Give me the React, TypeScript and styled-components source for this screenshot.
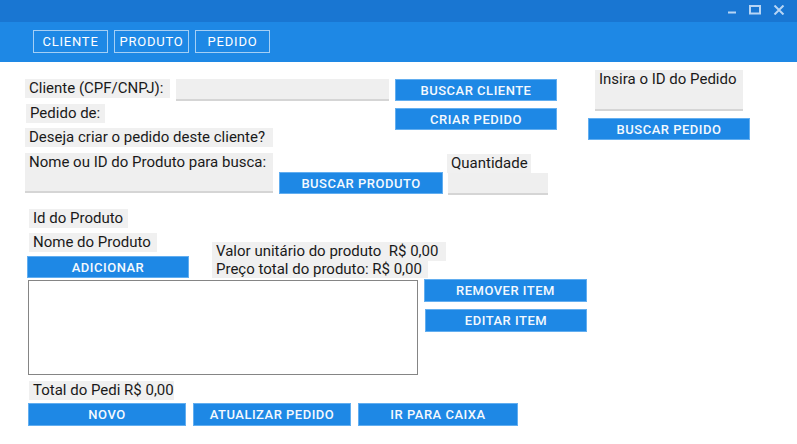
import React from "react";
import styled, { createGlobalStyle } from "styled-components";

const Global = createGlobalStyle`
  html, body { margin: 0; padding: 0; background: #ffffff; }
  body { font-family: Roboto, "Liberation Sans", Arial, sans-serif; }
  * { box-sizing: border-box; }
`;

const Window = styled.div`
  width: 797px;
  height: 444px;
  background: #ffffff;
  display: flex;
  flex-direction: column;
  overflow: hidden;
`;

const TitleBar = styled.div`
  height: 22px;
  background: #1976d2;
  display: flex;
  justify-content: flex-end;
  align-items: flex-start;
  padding-right: 12px;
`;

const WinControls = styled.div`
  display: flex;
  gap: 12px;
  padding-top: 5px;
`;

const NavBar = styled.div`
  height: 40px;
  background: #1e88e5;
  display: flex;
  align-items: flex-start;
  gap: 6px;
  padding: 8px 0 0 33px;
`;

const NavButton = styled.div`
  width: 75px;
  height: 23px;
  border: 1px solid rgba(255, 255, 255, 0.6);
  color: #ffffff;
  font-size: 13px;
  font-weight: 400;
  letter-spacing: 0.8px;
  display: flex;
  align-items: center;
  justify-content: center;
`;

const Content = styled.div`
  display: flex;
  flex-direction: column;
  padding-left: 25px;
`;

const TopSection = styled.div`
  display: flex;
  align-items: flex-start;
`;

const LeftStack = styled.div`
  display: flex;
  flex-direction: column;
  padding-top: 17px;
`;

const RightStack = styled.div`
  display: flex;
  flex-direction: column;
  align-items: flex-start;
  margin-left: 31px;
  padding-top: 8px;
  gap: 7px;
`;

const Row = styled.div<{ $gap?: number; $mt?: number; $ml?: number; $align?: string }>`
  display: flex;
  align-items: ${(p) => p.$align ?? "flex-start"};
  gap: ${(p) => p.$gap ?? 0}px;
  margin-top: ${(p) => p.$mt ?? 0}px;
  margin-left: ${(p) => p.$ml ?? 0}px;
`;

const Column = styled.div<{ $gap?: number; $mt?: number; $ml?: number; $w?: number }>`
  display: flex;
  flex-direction: column;
  align-items: flex-start;
  gap: ${(p) => p.$gap ?? 0}px;
  margin-top: ${(p) => p.$mt ?? 0}px;
  margin-left: ${(p) => p.$ml ?? 0}px;
  ${(p) => (p.$w ? `width: ${p.$w}px;` : "")}
`;

const Label = styled.div<{ $w?: number; $mt?: number; $ml?: number; $h?: number }>`
  height: ${(p) => p.$h ?? 19}px;
  background: #f0f0f0;
  color: #1a1a1a;
  font-size: 15px;
  line-height: ${(p) => p.$h ?? 19}px;
  padding: 0 4px;
  white-space: nowrap;
  overflow: hidden;
  ${(p) => (p.$w ? `width: ${p.$w}px;` : "")}
  margin-top: ${(p) => p.$mt ?? 0}px;
  margin-left: ${(p) => p.$ml ?? 0}px;
`;

const Field = styled.div<{ $w: number; $h: number; $mt?: number; $ml?: number }>`
  width: ${(p) => p.$w}px;
  height: ${(p) => p.$h}px;
  margin-top: ${(p) => p.$mt ?? 0}px;
  margin-left: ${(p) => p.$ml ?? 0}px;
  background: #efefef;
  border-bottom: 2px solid #d5d5d5;
  color: #1a1a1a;
  font-size: 15px;
  line-height: 19px;
  padding: 0 4px;
  white-space: nowrap;
`;

const Button = styled.div<{ $w: number; $h?: number; $mt?: number; $ml?: number }>`
  width: ${(p) => p.$w}px;
  height: ${(p) => p.$h ?? 22}px;
  margin-top: ${(p) => p.$mt ?? 0}px;
  margin-left: ${(p) => p.$ml ?? 0}px;
  background: #1e88e5;
  border: 1px solid #62aef0;
  color: #f4f9fe;
  font-size: 13px;
  font-weight: 500;
  letter-spacing: 0.5px;
  display: flex;
  align-items: center;
  justify-content: center;
  flex-shrink: 0;
`;

const ListBox = styled.div`
  width: 390px;
  height: 95px;
  border: 1px solid #858585;
  background: #ffffff;
  margin-left: 3px;
`;

export default function App() {
  return (
    <>
      <Global />
      <Window>
        <TitleBar>
          <WinControls>
            <svg width="12" height="10" viewBox="0 0 12 10">
              <rect x="3" y="6.5" width="8" height="2" fill="#b7d5f5" />
            </svg>
            <svg width="12" height="10" viewBox="0 0 12 10">
              <rect x="1" y="1" width="10" height="7.5" fill="none" stroke="#b7d5f5" strokeWidth="2" />
            </svg>
            <svg width="12" height="10" viewBox="0 0 12 10">
              <path d="M1.5 0.5 L10.5 9.5 M10.5 0.5 L1.5 9.5" stroke="#b7d5f5" strokeWidth="2" />
            </svg>
          </WinControls>
        </TitleBar>
        <NavBar>
          <NavButton>CLIENTE</NavButton>
          <NavButton>PRODUTO</NavButton>
          <NavButton>PEDIDO</NavButton>
        </NavBar>
        <Content>
          <TopSection>
            <LeftStack>
              <Row>
                <Label $w={145}>Cliente (CPF/CNPJ):</Label>
                <Field $w={213} $h={22} $ml={6} />
                <Button $w={162} $ml={6}>BUSCAR CLIENTE</Button>
              </Row>
              <Row>
                <Column $w={364}>
                  <Label $mt={3} $ml={1} $w={79}>Pedido de:</Label>
                  <Label $mt={5} $w={248}>Deseja criar o pedido deste cliente?</Label>
                </Column>
                <Button $w={162} $mt={7} $ml={6}>CRIAR PEDIDO</Button>
              </Row>
              <Row $mt={6}>
                <Field $w={248} $h={40}>Nome ou ID do Produto para busca:</Field>
                <Button $w={164} $mt={19} $ml={6}>BUSCAR PRODUTO</Button>
                <Column $ml={4}>
                  <Label $w={84} $mt={1}>Quantidade</Label>
                  <Field $w={100} $h={22} $ml={1} />
                </Column>
              </Row>
            </LeftStack>
            <RightStack>
              <Field $w={148} $h={41} $ml={7}>Insira o ID do Pedido</Field>
              <Button $w={162}>BUSCAR PEDIDO</Button>
            </RightStack>
          </TopSection>

          <Label $w={99} $mt={14} $ml={4}>Id do Produto</Label>
          <Row $mt={5} $ml={2} $align="flex-end">
            <Column $gap={4}>
              <Label $w={128} $ml={2}>Nome do Produto</Label>
              <Button $w={162}>ADICIONAR</Button>
            </Column>
            <Column $ml={23}>
              <Label $w={234}>Valor unitário do produto&nbsp; R$ 0,00</Label>
              <Label $w={216} $h={17}>Preço total do produto: R$ 0,00</Label>
            </Column>
          </Row>
          <Row $mt={2}>
            <ListBox />
            <Column $ml={6} $mt={-1} $gap={7}>
              <Button $w={163} $h={23}>REMOVER ITEM</Button>
              <Button $w={162} $h={23} $ml={1}>EDITAR ITEM</Button>
            </Column>
          </Row>
          <Label $w={145} $mt={6} $ml={4}>Total do Pedi R$ 0,00</Label>
          <Row $mt={3} $ml={3} $gap={7}>
            <Button $w={158} $h={23}>NOVO</Button>
            <Button $w={158} $h={23}>ATUALIZAR PEDIDO</Button>
            <Button $w={160} $h={23}>IR PARA CAIXA</Button>
          </Row>
        </Content>
      </Window>
    </>
  );
}
